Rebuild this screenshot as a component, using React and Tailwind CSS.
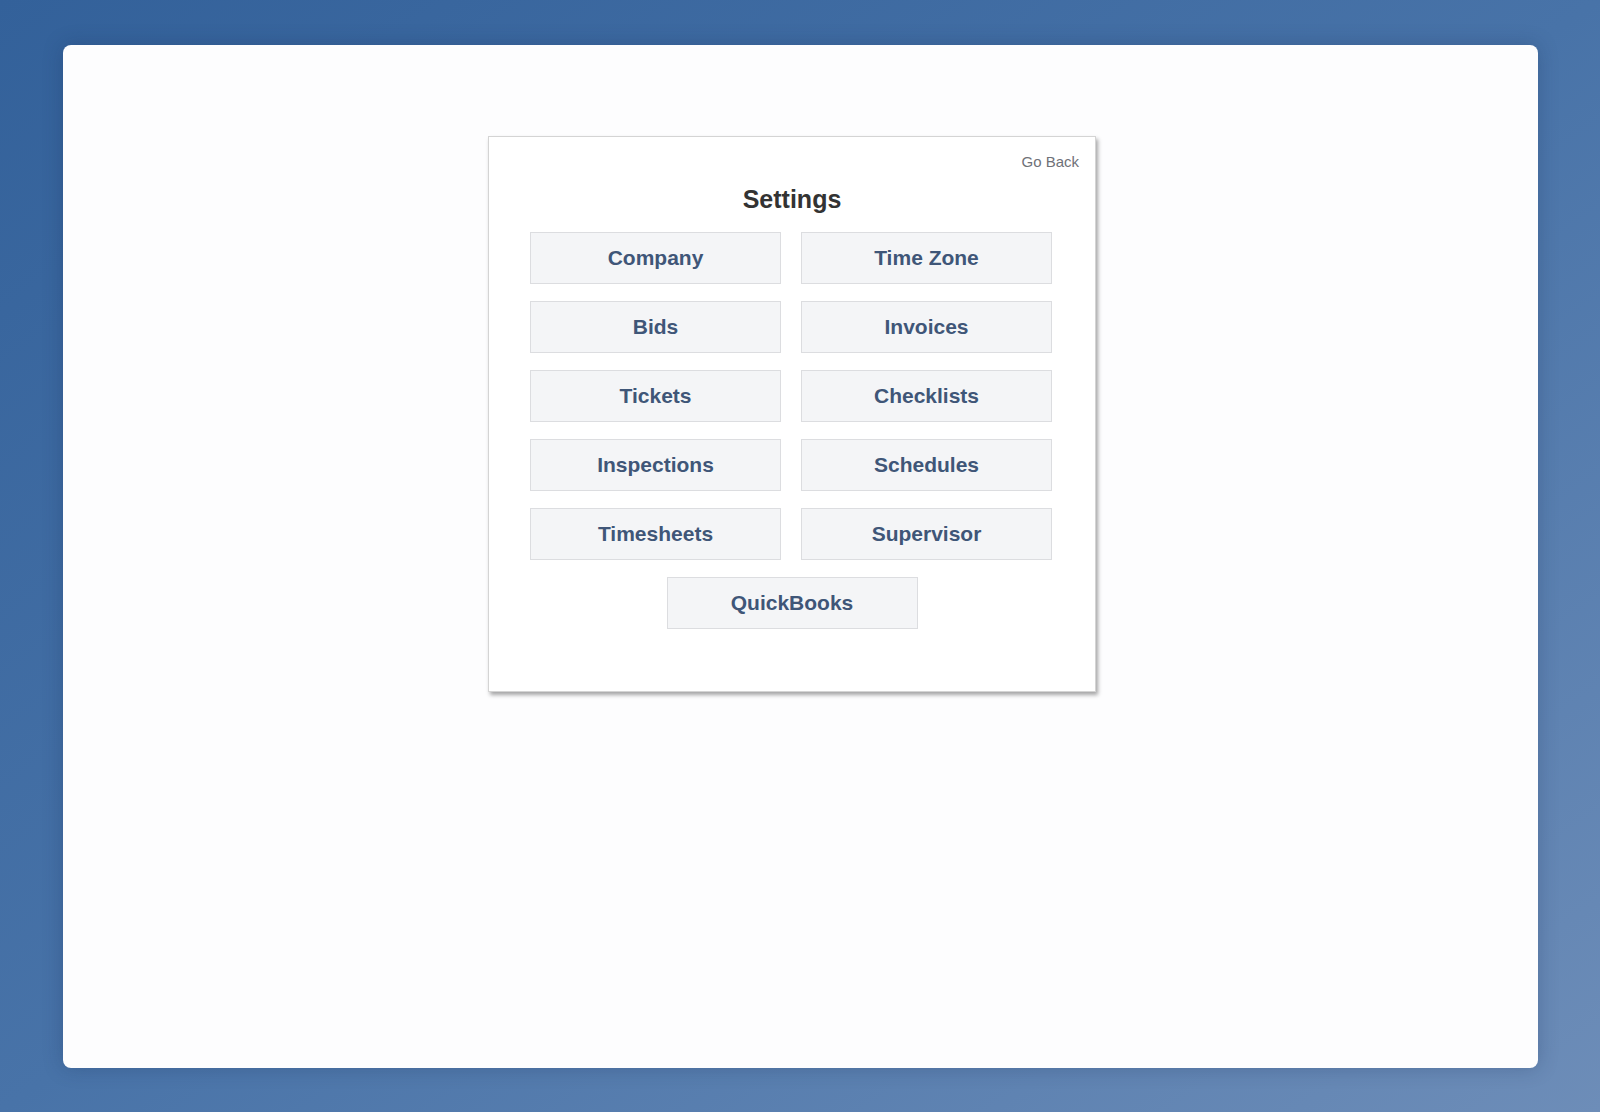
const items = [
  'Company',
  'Time Zone',
  'Bids',
  'Invoices',
  'Tickets',
  'Checklists',
  'Inspections',
  'Schedules',
  'Timesheets',
  'Supervisor',
];

function SettingButton({ label }) {
  return (
    <button
      type="button"
      className="h-[52px] w-[251px] bg-[#f4f5f7] border border-[#dcdde0] text-[21px] font-bold text-[#3f5678]"
    >
      {label}
    </button>
  );
}

export default function App() {
  return (
    <div
      className="min-h-screen w-full bg-gradient-to-br from-[#33619a] via-[#4873a8] to-[#6d8db8] pt-[45px] pl-[63px] pr-[62px] pb-[44px]"
      style={{ fontFamily: '"Liberation Sans", Arial, sans-serif' }}
    >
      <div className="h-[1023px] rounded-lg bg-[#fdfdfe] shadow-[0_0_20px_rgba(20,40,80,0.25)] pt-[91px] pl-[425px]">
        {/* Settings card */}
        <div className="relative w-[608px] h-[556px] bg-white border border-[#d4d4d4] shadow-[2px_3px_4px_rgba(0,0,0,0.35)] px-[41px]">
          <button
            type="button"
            className="absolute right-[16px] top-[14px] text-[15px] text-[#6f7178]"
          >
            Go Back
          </button>

          <h1 className="pt-[50px] text-center text-[25px] font-bold leading-none text-[#333]">
            Settings
          </h1>

          <div className="mt-[20px] grid grid-cols-[251px_251px] gap-x-[20px] gap-y-[17px]">
            {items.map((item) => (
              <SettingButton key={item} label={item} />
            ))}
          </div>

          <div className="mt-[17px] flex justify-center">
            <SettingButton label="QuickBooks" />
          </div>
        </div>
      </div>
    </div>
  );
}
